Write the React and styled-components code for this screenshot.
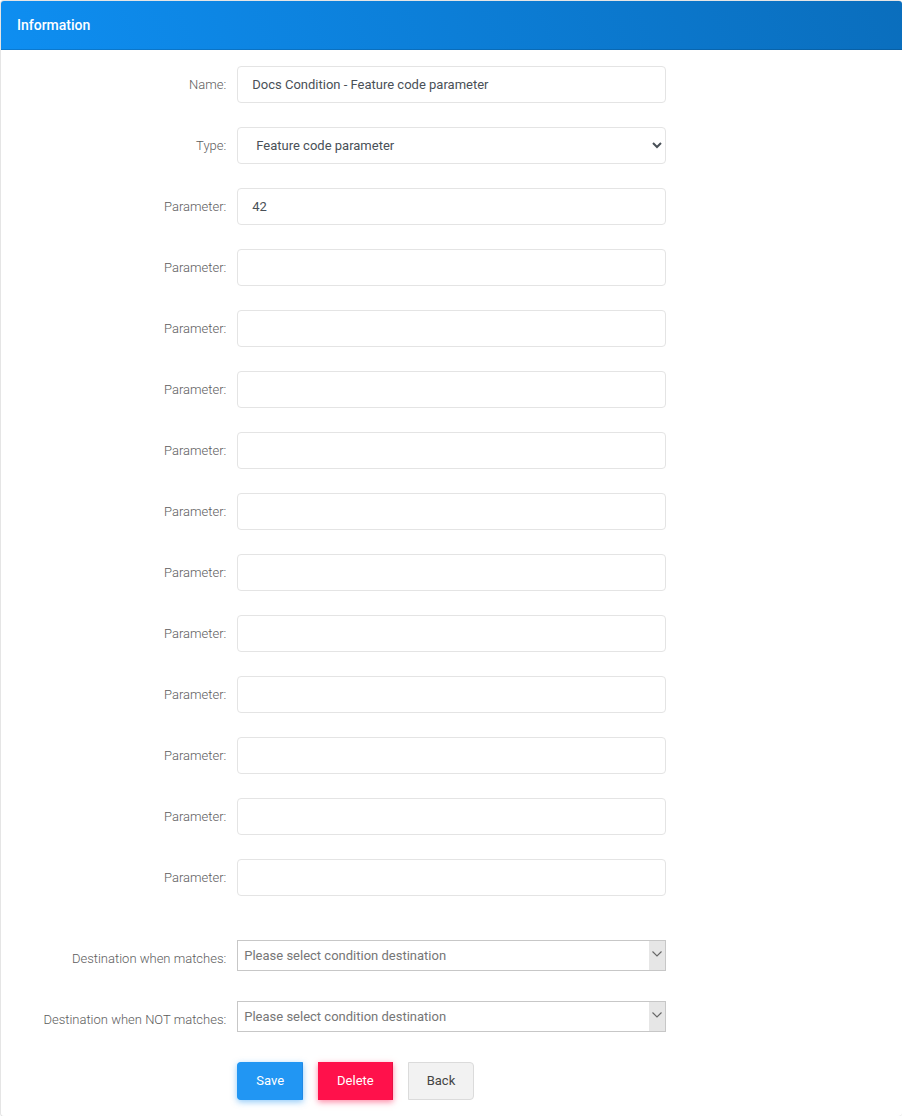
import React from "react";
import styled, { createGlobalStyle } from "styled-components";

const parameters = ["42", "", "", "", "", "", "", "", "", "", "", ""];

const destinations = [
  { id: "matches", label: "Destination when matches:" },
  { id: "not-matches", label: "Destination when NOT matches:" },
];

const App = () => {
  return (
    <>
      <GlobalStyle />
      <Panel>
        <Header>
          <Title>Information</Title>
        </Header>
        <Form onSubmit={(e) => e.preventDefault()}>
          <Fields>
            <Row>
              <Label htmlFor="name">Name:</Label>
              <Field>
                <Input
                  id="name"
                  type="text"
                  defaultValue="Docs Condition - Feature code parameter"
                />
              </Field>
            </Row>
            <Row>
              <Label htmlFor="type">Type:</Label>
              <Field>
                <Select id="type" defaultValue="feature">
                  <option value="feature">Feature code parameter</option>
                </Select>
              </Field>
            </Row>
            {parameters.map((value, i) => (
              <Row key={i}>
                <Label htmlFor={`parameter-${i}`}>Parameter:</Label>
                <Field>
                  <Input
                    id={`parameter-${i}`}
                    type="text"
                    defaultValue={value}
                  />
                </Field>
              </Row>
            ))}
          </Fields>
          <Destinations>
            {destinations.map(({ id, label }) => (
              <Row key={id}>
                <ComboLabel htmlFor={id}>{label}</ComboLabel>
                <Field>
                  <Combo>
                    <ComboInput
                      id={id}
                      type="text"
                      placeholder="Please select condition destination"
                    />
                    <ComboButton type="button" aria-label="Show destinations">
                      <svg width="10" height="6" viewBox="0 0 10 6">
                        <path
                          d="M0.5 0.5 L5 5 L9.5 0.5"
                          fill="none"
                          stroke="#666"
                          strokeWidth="1.1"
                        />
                      </svg>
                    </ComboButton>
                  </Combo>
                </Field>
              </Row>
            ))}
          </Destinations>
          <Row>
            <Actions>
              <SaveButton type="submit">Save</SaveButton>
              <DeleteButton type="button">Delete</DeleteButton>
              <BackButton type="button">Back</BackButton>
            </Actions>
          </Row>
        </Form>
      </Panel>
    </>
  );
};

export default App;

const GlobalStyle = createGlobalStyle`
  * {
    box-sizing: border-box;
  }

  body {
    margin: 0;
    background-color: #fff;
    font-family: Roboto, "Liberation Sans", sans-serif;
    font-size: 13px;
  }

  input, select, button {
    font-family: inherit;
    font-size: 13px;
  }
`;

const Panel = styled.div`
  width: 100%;
  border: 1px solid #e5e5e5;
  border-right: none;
  border-radius: 4px;
`;
const Header = styled.div`
  height: 49px;
  padding: 0 16px;
  display: flex;
  align-items: center;
  background: linear-gradient(70deg, #0e8ef1, #0a6ebd);
  border-bottom: 1px solid rgba(0, 0, 0, 0.13);
  border-radius: 3px 3px 0 0;
`;
const Title = styled.h1`
  margin: 0;
  font-size: 14px;
  font-weight: 500;
  line-height: 20px;
  color: #fff;
`;
const Form = styled.form`
  padding: 16px 0;
`;
const Fields = styled.div`
  display: flex;
  flex-direction: column;
  gap: 24px;
`;
const Destinations = styled.div`
  display: flex;
  flex-direction: column;
  gap: 30px;
  margin: 44px 0 30px;
`;
const Row = styled.div`
  display: grid;
  grid-template-columns: 25% 50% 25%;
  align-items: center;
`;
const Label = styled.label`
  text-align: right;
  font-weight: 300;
  line-height: 20px;
  color: #5c5c5c;
`;
const ComboLabel = styled(Label)`
  padding-top: 6px;
`;
const Field = styled.div`
  padding: 0 11px;
  display: flex;
`;
const Input = styled.input`
  width: 100%;
  height: 37px;
  padding: 0 14px;
  border: 1px solid #e4e4e4;
  border-radius: 4px;
  background-color: #fff;
  color: #495057;
`;
const Select = styled(Input).attrs({ as: "select" })``;
const Combo = styled.div`
  width: 100%;
  height: 31px;
  display: flex;
  border: 1px solid #c7c7c7;
`;
const ComboInput = styled.input`
  flex: 1;
  min-width: 0;
  padding: 0 6px;
  border: none;
  background-color: #fff;
  color: #555;

  &::placeholder {
    color: #767676;
  }
`;
const ComboButton = styled.button`
  width: 16px;
  padding: 0 0 4px;
  display: flex;
  justify-content: center;
  align-items: center;
  border: none;
  background-color: #e6e6e6;
`;
const Actions = styled.div`
  grid-column: 2;
  padding: 0 11px;
  display: flex;
  gap: 15px;
`;
const Button = styled.button`
  height: 38px;
  padding: 0 18px 2px;
  border: 1px solid rgba(0, 0, 0, 0.1);
  cursor: pointer;
`;
const SaveButton = styled(Button)`
  border-color: #2196f3 #1e88e5 #2196f3 #2196f3;
  border-radius: 4px 0 0 4px;
  background-color: #2196f3;
  color: #fff;
  box-shadow: 0 2px 6px rgba(33, 150, 243, 0.5);
`;
const DeleteButton = styled(Button)`
  border-color: #ff114b #e60f43 #ff114b #ff114b;
  background-color: #ff114b;
  color: #fff;
  box-shadow: 0 2px 6px rgba(255, 17, 75, 0.5);
`;
const BackButton = styled(Button)`
  border-color: #dbdbdb;
  border-radius: 0 4px 4px 0;
  background-color: #f2f2f2;
  color: #444;
`;
